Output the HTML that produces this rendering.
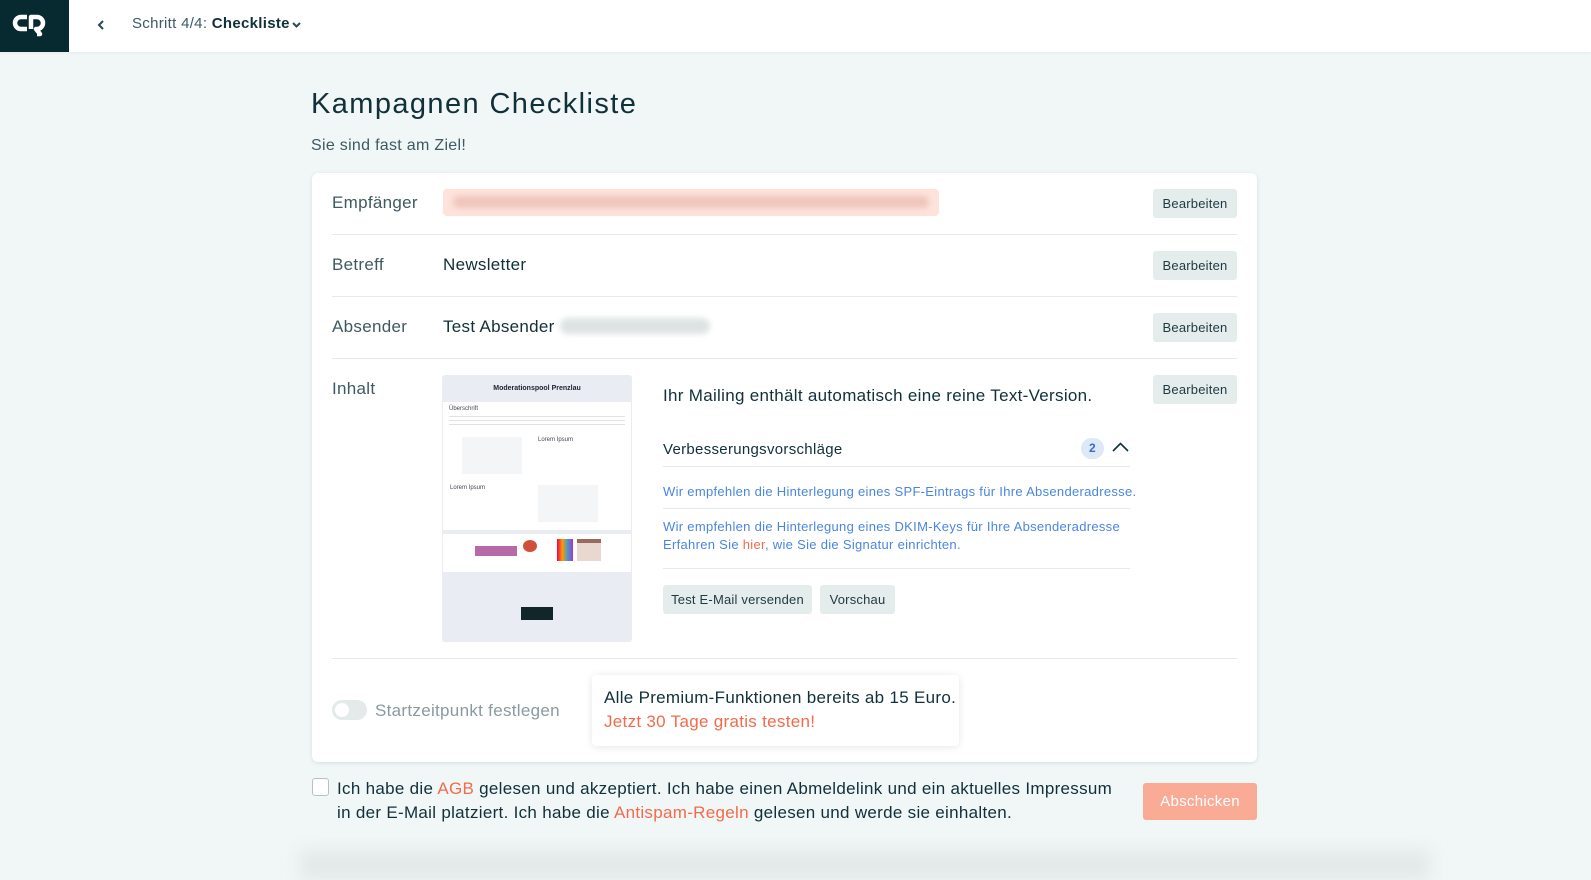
<!DOCTYPE html>
<html><head><meta charset="utf-8"><style>
*{box-sizing:border-box;margin:0;padding:0}
body{width:1591px;height:870px;overflow:hidden;background:#f1f6f6;font-family:"Liberation Sans",sans-serif;color:#10303a;position:relative;letter-spacing:0.3px}
.hdr{position:absolute;left:0;top:0;width:1591px;height:52px;background:#fff;box-shadow:0 1px 3px rgba(0,0,0,.05)}
.logo{position:absolute;left:0;top:0;width:69px;height:52px;background:#062a30}
.abs{position:absolute;white-space:nowrap}
.card{position:absolute;left:312px;top:173px;width:945px;height:589px;background:#fff;border-radius:6px;box-shadow:0 1px 4px rgba(0,0,0,.1)}
.lbl{font-size:17px;color:#3d5a62}
.val{font-size:17px;color:#10303a}
.btn{position:absolute;background:#e4ecec;border-radius:3px;font-size:13px;color:#1d3a42;height:29px;line-height:29px;text-align:center;letter-spacing:0.2px}
.hr{position:absolute;height:1px;background:#e3eaea}
.blue{color:#4a86e0;font-size:13px}
</style></head><body>
<div class="hdr">
 <div class="logo"><svg width="69" height="52" viewBox="0 0 69 52"><path d="M27 17h-6a6 6 0 0 0 0 12h6" fill="none" stroke="#fff" stroke-width="4.5"/><path d="M31 29v-12h6a6 6 0 0 1 0 12h-1l4 5h-3" fill="none" stroke="#fff" stroke-width="4.5" stroke-linejoin="round"/></svg></div>
 <svg class="abs" style="left:96px;top:19px" width="10" height="12" viewBox="0 0 10 12"><path d="M7 2L3 6l4 4" fill="none" stroke="#2a4a52" stroke-width="2"/></svg>
 <div class="abs" style="left:132px;top:15px;font-size:15px;color:#3d5a62">Schritt 4/4: <b style="color:#10303a;font-weight:600">Checkliste</b></div>
 <svg class="abs" style="left:291px;top:20px" width="11" height="9" viewBox="0 0 11 9"><path d="M2 3l3.5 3.5L9 3" fill="none" stroke="#2a4a52" stroke-width="2"/></svg>
</div>
<div class="abs" style="left:311px;top:88px;font-size:29px;color:#10303a;letter-spacing:1.4px">Kampagnen Checkliste</div>
<div class="abs" style="left:311px;top:137px;font-size:16px;color:#3d5a62">Sie sind fast am Ziel!</div>
<div class="card"></div>
<div class="abs lbl" style="left:332px;top:193px">Empfänger</div>
<div class="abs" style="left:443px;top:189px;width:496px;height:27px;background:#fde3dc;border-radius:4px"><div style="margin:7px 10px;height:12px;background:#efc5bc;border-radius:6px;filter:blur(3px)"></div></div>
<div class="btn" style="left:1153px;top:189px;width:84px">Bearbeiten</div>
<div class="hr" style="left:332px;top:234px;width:905px"></div>
<div class="abs lbl" style="left:332px;top:255px">Betreff</div>
<div class="abs val" style="left:443px;top:255px">Newsletter</div>
<div class="btn" style="left:1153px;top:251px;width:84px">Bearbeiten</div>
<div class="hr" style="left:332px;top:296px;width:905px"></div>
<div class="abs lbl" style="left:332px;top:317px">Absender</div>
<div class="abs val" style="left:443px;top:317px">Test Absender</div>
<div class="abs" style="left:560px;top:318px;width:150px;height:16px;background:#dde3e3;border-radius:8px;filter:blur(3px)"></div>
<div class="btn" style="left:1153px;top:313px;width:84px">Bearbeiten</div>
<div class="hr" style="left:332px;top:358px;width:905px"></div>
<div class="abs lbl" style="left:332px;top:379px">Inhalt</div>
<div class="abs" style="left:442px;top:375px;width:190px;height:267px;background:#e9edf3;border-radius:3px;overflow:hidden;letter-spacing:0">
 <div style="height:27px;text-align:center;font-size:7px;font-weight:bold;line-height:27px;color:#223">Moderationspool Prenzlau</div>
 <div style="background:#fff;height:128px;margin:0 1px;padding:4px 6px;font-size:6px;color:#445">Überschrift
  <div style="height:12px;margin-top:3px;background:repeating-linear-gradient(#fff 0 1px,#ccd 1px 2px,#fff 2px 4px);opacity:.6"></div>
  <div style="position:absolute;left:20px;top:62px;width:60px;height:37px;background:#f4f5f7"></div>
  <div style="position:absolute;left:96px;top:62px">Lorem Ipsum</div>
  <div style="position:absolute;left:8px;top:110px">Lorem Ipsum</div>
  <div style="position:absolute;left:96px;top:110px;width:60px;height:37px;background:#f4f5f7"></div>
 </div>
 <div style="background:#fff;height:38px;margin:4px 1px 0;position:relative">
  <div style="position:absolute;left:32px;top:12px;width:42px;height:10px;background:#b86aa8"></div>
  <div style="position:absolute;left:80px;top:6px;width:14px;height:12px;background:#d0503a;border-radius:50%"></div>
  <div style="position:absolute;left:114px;top:5px;width:16px;height:22px;background:linear-gradient(90deg,#e05,#f90,#49c,#a3c)"></div>
  <div style="position:absolute;left:134px;top:5px;width:24px;height:22px;background:#e8d8d0;border-top:4px solid #9a6a5e"></div>
 </div>
 <div style="position:absolute;left:79px;top:232px;width:32px;height:13px;background:#12262a"></div>
</div>
<div class="abs" style="left:663px;top:386px;font-size:17px;color:#10303a">Ihr Mailing enthält automatisch eine reine Text-Version.</div>
<div class="btn" style="left:1153px;top:375px;width:84px">Bearbeiten</div>
<div class="abs" style="left:663px;top:441px;font-size:15px;color:#10303a">Verbesserungsvorschläge</div>
<div class="abs" style="left:1081px;top:438px;width:23px;height:21px;border-radius:11px;background:#dde8f8;color:#3b6ec0;font-size:12px;font-weight:bold;text-align:center;line-height:21px">2</div>
<svg class="abs" style="left:1112px;top:441px" width="17" height="12" viewBox="0 0 17 12"><path d="M1 10l7.5-7.5L16 10" fill="none" stroke="#10303a" stroke-width="1.6"/></svg>
<div class="hr" style="left:663px;top:466px;width:467px"></div>
<div class="abs blue" style="left:663px;top:484px">Wir empfehlen die Hinterlegung eines SPF-Eintrags für Ihre Absenderadresse.</div>
<div class="hr" style="left:663px;top:508px;width:467px"></div>
<div class="abs blue" style="left:663px;top:518px;line-height:18px">Wir empfehlen die Hinterlegung eines DKIM-Keys für Ihre Absenderadresse<br>Erfahren Sie <span style="color:#f26b4b">hier</span>, wie Sie die Signatur einrichten.</div>
<div class="hr" style="left:663px;top:568px;width:467px"></div>
<div class="btn" style="left:663px;top:585px;width:149px">Test E-Mail versenden</div>
<div class="btn" style="left:820px;top:585px;width:75px">Vorschau</div>
<div class="hr" style="left:332px;top:658px;width:905px"></div>
<div class="abs" style="left:332px;top:700px;width:35px;height:20px;border-radius:10px;background:#e4eaea"><div style="margin:3px;width:14px;height:14px;border-radius:50%;background:#fff"></div></div>
<div class="abs" style="left:375px;top:701px;font-size:17px;color:#8a9a9e">Startzeitpunkt festlegen</div>
<div class="abs" style="left:592px;top:675px;width:367px;height:71px;background:#fff;border-radius:4px;box-shadow:0 1px 8px rgba(0,0,0,.1)"></div>
<div class="abs" style="left:604px;top:686px;font-size:17px;color:#10303a;line-height:24px">Alle Premium-Funktionen bereits ab 15 Euro.<br><span style="color:#f26b4b">Jetzt 30 Tage gratis testen!</span></div>
<div class="abs" style="left:312px;top:778px;width:17px;height:18px;border:1px solid #b8c2c4;border-radius:3px;background:#fff"></div>
<div class="abs" style="left:337px;top:777px;font-size:17px;line-height:24px;color:#10303a">Ich habe die <span style="color:#f26b4b">AGB</span> gelesen und akzeptiert. Ich habe einen Abmeldelink und ein aktuelles Impressum<br>in der E-Mail platziert. Ich habe die <span style="color:#f26b4b">Antispam-Regeln</span> gelesen und werde sie einhalten.</div>
<div class="abs" style="left:1143px;top:783px;width:114px;height:37px;background:#f9ab96;border-radius:3px;color:#fff;font-size:15px;text-align:center;line-height:37px">Abschicken</div>
<div class="abs" style="left:300px;top:850px;width:1130px;height:30px;background:#e3e8e8;filter:blur(8px)"></div>
</body></html>
